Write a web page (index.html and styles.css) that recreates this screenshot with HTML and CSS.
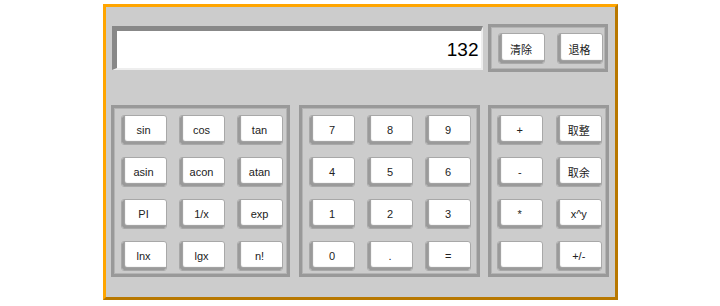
FILE: index.html
```html
<!DOCTYPE html>
<html lang="zh-CN">
<head>
    <meta charset="UTF-8">
    <title>计算器</title>
    <link rel="stylesheet" href="styles.css">
</head>
<body>
    <div class="calc">
        <div class="top-row">
            <input class="display" type="text" value="132" readonly>
            <div class="panel panel-edit">
                <button class="btn">清除</button>
                <button class="btn">退格</button>
            </div>
        </div>
        <div class="bottom-row">
            <div class="panel panel-func">
                <button class="btn">sin</button>
                <button class="btn">cos</button>
                <button class="btn">tan</button>
                <button class="btn">asin</button>
                <button class="btn">acon</button>
                <button class="btn">atan</button>
                <button class="btn">PI</button>
                <button class="btn">1/x</button>
                <button class="btn">exp</button>
                <button class="btn">lnx</button>
                <button class="btn">lgx</button>
                <button class="btn">n!</button>
            </div>
            <div class="panel panel-num">
                <button class="btn">7</button>
                <button class="btn">8</button>
                <button class="btn">9</button>
                <button class="btn">4</button>
                <button class="btn">5</button>
                <button class="btn">6</button>
                <button class="btn">1</button>
                <button class="btn">2</button>
                <button class="btn">3</button>
                <button class="btn">0</button>
                <button class="btn">.</button>
                <button class="btn">=</button>
            </div>
            <div class="panel panel-op">
                <button class="btn">+</button>
                <button class="btn">取整</button>
                <button class="btn">-</button>
                <button class="btn">取余</button>
                <button class="btn">*</button>
                <button class="btn">x^y</button>
                <button class="btn"></button>
                <button class="btn">+/-</button>
            </div>
        </div>
    </div>
</body>
</html>
```

FILE: styles.css
```css
body {
    margin: 0;
    background-color: #fff;
    font-family: Arial, "Liberation Sans", "Noto Sans CJK SC", sans-serif;
}
.calc {
    box-sizing: border-box;
    width: 515px;
    height: 296px;
    margin: 4px auto 0;
    padding: 17px 6px 0 5px;
    background-color: #ccc;
    border: 3px solid;
    border-color: #ffa500 #b87800 #b87800 #ffa500;
}
.top-row {
    display: flex;
    align-items: center;
    height: 48px;
}
.display {
    box-sizing: border-box;
    width: 371px;
    height: 44px;
    margin: 0 5px 0 1px;
    padding: 0 2px 0 0;
    border-style: solid;
    border-width: 5px 2px 2px 5px;
    border-color: #888 #eee #eee #888;
    background-color: #fff;
    text-align: right;
    font-family: Arial, "Liberation Sans", sans-serif;
    font-size: 19px;
    color: #000;
    outline: none;
}
.panel {
    box-sizing: border-box;
    display: grid;
    border: 3px solid #999;
    box-shadow: inset 0 0 0 1px #b4b4b4;
}
.panel-edit {
    width: 120px;
    height: 48px;
    grid-template-columns: 47px 46px;
    column-gap: 12px;
    padding: 6px 0 0 7px;
}
.panel-edit .btn {
    height: 31px;
}
.bottom-row {
    display: flex;
    gap: 9px;
    margin-top: 33px;
}
.panel-func,
.panel-num {
    width: 180px;
    height: 172px;
    grid-template-columns: repeat(3, 46px);
    grid-auto-rows: 30px;
    column-gap: 12px;
    row-gap: 12px;
    padding: 7px 0 0 7px;
}
.panel-num {
    width: 181px;
}
.panel-op {
    width: 121px;
    height: 172px;
    margin-left: -1px;
    grid-template-columns: repeat(2, 46px);
    grid-auto-rows: 30px;
    column-gap: 13px;
    row-gap: 12px;
    padding: 7px 0 0 6px;
}
.btn {
    box-sizing: border-box;
    height: 30px;
    margin: 0;
    padding: 0;
    background-color: #fff;
    border: 1px solid #a8a8a8;
    border-radius: 3px;
    box-shadow: inset 3px -3px 1px #9a9a9a;
    font-family: Arial, "Liberation Sans", "Noto Sans CJK SC", sans-serif;
    font-size: 11px;
    color: #222;
    cursor: pointer;
}
```
